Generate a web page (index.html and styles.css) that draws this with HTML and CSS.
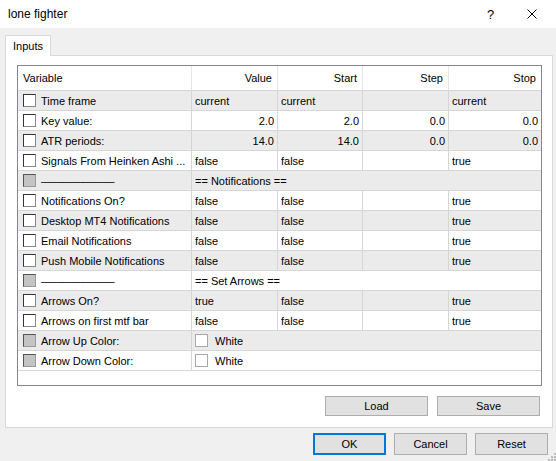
FILE: index.html
```html
<!DOCTYPE html>
<html lang="en">

<head>
  <meta charset="UTF-8">
  <title>lone fighter</title>
  <link rel="stylesheet" href="styles.css">
</head>

<body>

  <div class="titlebar">
    <span class="title">lone fighter</span>
    <span class="help">?</span>
    <svg class="close" width="10" height="10" viewBox="0 0 10 10">
      <path d="M0.5 0.5 L9.5 9.5 M9.5 0.5 L0.5 9.5" stroke="#000" stroke-width="1" fill="none" />
    </svg>
  </div>

  <div class="tabs">
    <div class="tab">Inputs</div>
  </div>

  <div class="panel">
    <div class="list">
      <div class="row head">
        <div class="cell">Variable</div>
        <div class="cell num">Value</div>
        <div class="cell num">Start</div>
        <div class="cell num">Step</div>
        <div class="cell num">Stop</div>
      </div>

      <div class="row alt">
        <div class="cell var"><span class="cb"></span>Time frame</div>
        <div class="cell">current</div>
        <div class="cell">current</div>
        <div class="cell"></div>
        <div class="cell">current</div>
      </div>
      <div class="row">
        <div class="cell var"><span class="cb"></span>Key value:</div>
        <div class="cell num">2.0</div>
        <div class="cell num">2.0</div>
        <div class="cell num">0.0</div>
        <div class="cell num">0.0</div>
      </div>
      <div class="row alt">
        <div class="cell var"><span class="cb"></span>ATR periods:</div>
        <div class="cell num">14.0</div>
        <div class="cell num">14.0</div>
        <div class="cell num">0.0</div>
        <div class="cell num">0.0</div>
      </div>
      <div class="row">
        <div class="cell var"><span class="cb"></span>Signals From Heinken Ashi ...</div>
        <div class="cell">false</div>
        <div class="cell">false</div>
        <div class="cell"></div>
        <div class="cell">true</div>
      </div>
      <div class="row alt">
        <div class="cell var"><span class="cb off"></span><span class="dash">———————</span></div>
        <div class="cell wide">== Notifications ==</div>
      </div>
      <div class="row">
        <div class="cell var"><span class="cb"></span>Notifications On?</div>
        <div class="cell">false</div>
        <div class="cell">false</div>
        <div class="cell"></div>
        <div class="cell">true</div>
      </div>
      <div class="row alt">
        <div class="cell var"><span class="cb"></span>Desktop MT4 Notifications</div>
        <div class="cell">false</div>
        <div class="cell">false</div>
        <div class="cell"></div>
        <div class="cell">true</div>
      </div>
      <div class="row">
        <div class="cell var"><span class="cb"></span>Email Notifications</div>
        <div class="cell">false</div>
        <div class="cell">false</div>
        <div class="cell"></div>
        <div class="cell">true</div>
      </div>
      <div class="row alt">
        <div class="cell var"><span class="cb"></span>Push Mobile Notifications</div>
        <div class="cell">false</div>
        <div class="cell">false</div>
        <div class="cell"></div>
        <div class="cell">true</div>
      </div>
      <div class="row">
        <div class="cell var"><span class="cb off"></span><span class="dash">———————</span></div>
        <div class="cell wide">== Set Arrows ==</div>
      </div>
      <div class="row alt">
        <div class="cell var"><span class="cb"></span>Arrows On?</div>
        <div class="cell">true</div>
        <div class="cell">false</div>
        <div class="cell"></div>
        <div class="cell">true</div>
      </div>
      <div class="row">
        <div class="cell var"><span class="cb"></span>Arrows on first mtf bar</div>
        <div class="cell">false</div>
        <div class="cell">false</div>
        <div class="cell"></div>
        <div class="cell">true</div>
      </div>
      <div class="row alt">
        <div class="cell var"><span class="cb off"></span>Arrow Up Color:</div>
        <div class="cell wide"><span class="swatch"></span>White</div>
      </div>
      <div class="row">
        <div class="cell var"><span class="cb off"></span>Arrow Down Color:</div>
        <div class="cell wide"><span class="swatch"></span>White</div>
      </div>
    </div>

    <div class="panel-buttons">
      <button class="btn wide-btn">Load</button>
      <button class="btn wide-btn">Save</button>
    </div>
  </div>

  <div class="dialog-buttons">
    <button class="btn default">OK</button>
    <button class="btn">Cancel</button>
    <button class="btn">Reset</button>
  </div>

  <svg class="grip" width="9" height="9" viewBox="0 0 9 9">
    <rect x="7" y="1" width="2" height="2" fill="#bcbcbc" />
    <rect x="4" y="4" width="2" height="2" fill="#bcbcbc" />
    <rect x="7" y="4" width="2" height="2" fill="#bcbcbc" />
    <rect x="1" y="7" width="2" height="2" fill="#bcbcbc" />
    <rect x="4" y="7" width="2" height="2" fill="#bcbcbc" />
    <rect x="7" y="7" width="2" height="2" fill="#bcbcbc" />
  </svg>

</body>

</html>
```

FILE: styles.css
```css
body {
  margin: 0;
  width: 556px;
  height: 461px;
  overflow: hidden;
  position: relative;
  background-color: #f0f0f0;
  font-family: "Liberation Sans", Arial, sans-serif;
  font-size: 11px;
  color: #000;
}

/* title bar */

.titlebar {
  height: 28px;
  background-color: #fff;
  display: flex;
  align-items: center;
  padding-left: 8px;
}

.title {
  font-size: 12px;
}

.help {
  margin-left: auto;
  font-size: 13px;
  width: 10px;
}

.close {
  margin-left: 30px;
  margin-right: 19px;
}

/* tab */

.tabs {
  display: flex;
  padding: 7px 0 0 5px;
}

.tab {
  height: 20px;
  line-height: 20px;
  padding: 0 7px;
  background-color: #fff;
  border: 1px solid #d9d9d9;
  border-bottom: none;
  position: relative;
  z-index: 1;
  margin-bottom: -1px;
}

.panel {
  box-sizing: border-box;
  width: 548px;
  height: 373px;
  margin-left: 5px;
  padding: 9px 0 0 11px;
  background-color: #fff;
  border: 1px solid #d9d9d9;
}

/* list view */

.list {
  box-sizing: border-box;
  width: 525px;
  height: 321px;
  border: 1px solid #828790;
  background-color: #fff;
}

.row {
  display: grid;
  grid-template-columns: 174px 86px 85px 86px 92px;
  height: 20px;
}

.row.alt {
  background-color: #ebebeb;
}

.row.head {
  height: 25px;
}

.cell {
  box-sizing: border-box;
  display: flex;
  align-items: center;
  padding: 0 3px;
  border-right: 1px solid #d6d6d6;
  border-bottom: 1px solid #d6d6d6;
  white-space: nowrap;
  overflow: hidden;
}

.cell:last-child {
  border-right: none;
}

.head .cell {
  padding: 0 5px;
  border-right-color: #e5e5e5;
  border-bottom-color: #d6d6d6;
}

.cell.num {
  justify-content: flex-end;
}

.cell.wide {
  grid-column: span 4;
}

.cell.var {
  padding-left: 5px;
}

.cb {
  box-sizing: border-box;
  width: 13px;
  height: 13px;
  margin-right: 5px;
  background-color: #fff;
  border: 1px solid #333;
  border-right-color: #888;
  border-bottom-color: #888;
  flex: none;
}

.cb.off {
  background-color: #c4c4c4;
  border-color: #555 #999 #999 #555;
}

.dash {
  font-size: 11px;
  letter-spacing: -0.6px;
}

.swatch {
  box-sizing: border-box;
  width: 13px;
  height: 13px;
  margin-right: 7px;
  background-color: #fff;
  border: 1px solid #a8a8a8;
  flex: none;
}

/* buttons */

.btn {
  box-sizing: border-box;
  font-family: "Liberation Sans", Arial, sans-serif;
  font-size: 11px;
  color: #000;
  background-color: #e1e1e1;
  border: 1px solid #adadad;
  padding: 0;
}

.panel-buttons {
  display: flex;
  justify-content: flex-end;
  gap: 9px;
  margin-top: 10px;
  padding-right: 12px;
}

.wide-btn {
  width: 103px;
  height: 20px;
}

.dialog-buttons {
  display: flex;
  justify-content: flex-end;
  gap: 8px;
  margin-top: 5px;
  padding-right: 8px;
}

.dialog-buttons .btn {
  width: 73px;
  height: 22px;
}

.btn.default {
  border: 2px solid #0078d7;
}

.grip {
  position: absolute;
  right: 0;
  bottom: 0;
}
```
